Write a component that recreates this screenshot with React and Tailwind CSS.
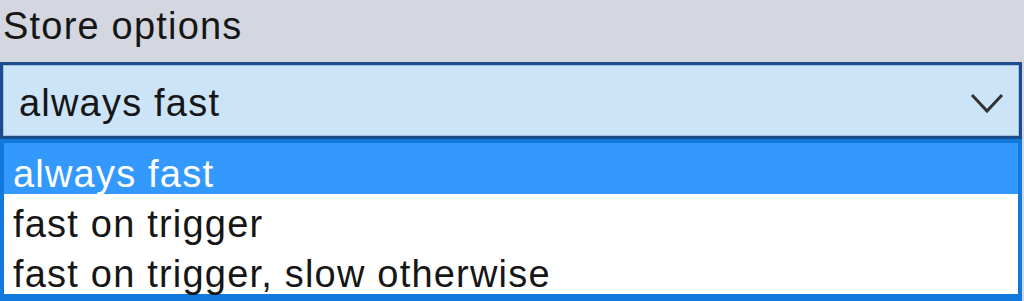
export default function App() {
  const options = ["always fast", "fast on trigger", "fast on trigger, slow otherwise"];
  const selected = 0;

  return (
    <div className="w-[1024px] h-[301px] overflow-hidden bg-[#d4d7df] font-['Liberation_Sans',Arial,sans-serif] text-[38px] tracking-[1.2px] text-[#161616]">
      <div className="h-[62px] pl-[3px] leading-[52px]">Store options</div>

      <div className="mr-[2px] h-[77px] border-[3px] border-[#1b4c8c] bg-[#cce4f7]">
        <div className="flex h-full items-center justify-between border border-[#9fc0e0] pl-[15px] pr-[14px]">
          <span className="pt-[6px]">always fast</span>
          <svg width="34" height="22" viewBox="0 0 34 22" fill="none" className="mt-[4px]">
            <path d="M2 3 L17 19 L32 3" stroke="#333" strokeWidth="3" />
          </svg>
        </div>
      </div>

      <div className="mr-[2px] border-[4px] border-b-[8px] border-[#1178dc] bg-white">
        {options.map((opt, i) => (
          <div
            key={opt}
            className={
              i === selected
                ? "h-[51px] pl-[9px] leading-[62px] bg-[#3399ff] text-white"
                : "h-[50px] pl-[9px] leading-[60px] text-[#161616]"
            }
          >
            {opt}
          </div>
        ))}
      </div>
    </div>
  );
}
